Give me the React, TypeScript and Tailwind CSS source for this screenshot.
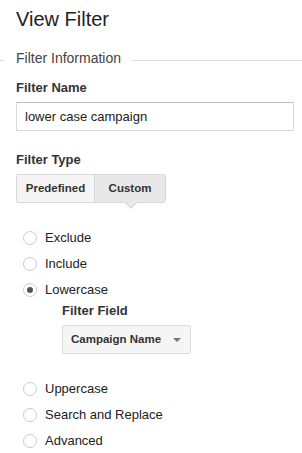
import React from "react";

function Radio({ label, checked }: { label: string; checked?: boolean }) {
  return (
    <div className="flex h-[26px] items-center">
      <span className="ml-[7px] flex h-[14px] w-[14px] items-center justify-center rounded-full border border-[#cccccc] bg-white">
        {checked && <span className="h-[6px] w-[6px] rounded-full bg-[#555]" />}
      </span>
      <span className="ml-[8px] text-[13px] leading-[16px] text-[#222]">{label}</span>
    </div>
  );
}

export default function App() {
  return (
    <div
      className="h-[453px] w-[302px] overflow-hidden bg-white px-4"
      style={{ fontFamily: '"Liberation Sans", Arial, sans-serif' }}
    >
      <div className="pt-[7px] text-[20px] leading-[24px] text-[#222]">View Filter</div>

      <div className="-mx-4 mt-[19px] flex items-start">
        <div className="mt-[10px] h-px w-[4px] bg-[#e0e0e0]" />
        <div className="ml-[12px] text-[14px] leading-[17px] text-[#444]">Filter Information</div>
        <div className="ml-[10px] mt-[10px] h-px flex-1 bg-[#e0e0e0]" />
      </div>

      <div className="mt-[13px] text-[13px] font-bold leading-[16px] text-[#333]">Filter Name</div>
      <div className="mt-[6px] flex h-[29px] w-[278px] items-center border border-[#d6d6d6] border-t-[#c0c0c0] bg-white px-[8px] text-[13px] text-[#222]">
        lower case campaign
      </div>

      <div className="mt-[21px] text-[13px] font-bold leading-[16px] text-[#333]">Filter Type</div>
      <div className="relative mt-[6px] flex h-[29px] w-[150px] rounded-[2px] border border-[#d9d9d9]">
        <div className="flex w-[77px] items-center justify-center rounded-l-[2px] bg-[#f5f5f5] text-[11.5px] font-bold text-[#333]">
          Predefined
        </div>
        <div className="flex flex-1 items-center justify-center rounded-r-[2px] border-l border-[#d9d9d9] bg-[#e8e8e8] text-[11.5px] font-bold text-[#333]">
          Custom
        </div>
        <div className="absolute left-[107px] top-[27px] h-0 w-0 border-x-[7px] border-t-[7px] border-x-transparent border-t-[#d9d9d9]" />
        <div className="absolute left-[108px] top-[26px] h-0 w-0 border-x-[6px] border-t-[6px] border-x-transparent border-t-[#e8e8e8]" />
      </div>

      <div className="mt-[22px]">
        <Radio label="Exclude" />
        <Radio label="Include" />
        <Radio label="Lowercase" checked />
      </div>

      <div className="ml-[46px]">
        <div className="text-[13px] font-bold leading-[16px] text-[#333]">Filter Field</div>
        <div className="mt-[6px] flex h-[29px] w-[129px] items-center rounded-[2px] border border-[#dcdcdc] bg-[#f5f5f5] pl-[8px] text-[11.5px] font-bold text-[#333]">
          <span>Campaign Name</span>
          <span className="ml-auto mr-[9px] h-0 w-0 border-x-[4px] border-t-[4px] border-x-transparent border-t-[#777]" />
        </div>
      </div>

      <div className="mt-[22px]">
        <Radio label="Uppercase" />
        <Radio label="Search and Replace" />
        <Radio label="Advanced" />
      </div>
    </div>
  );
}
